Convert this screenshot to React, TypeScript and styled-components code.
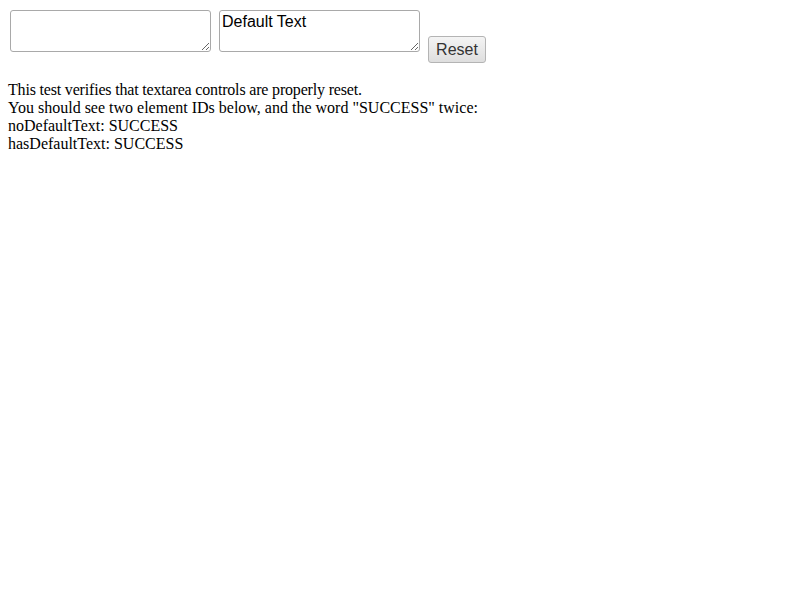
import styled, { createGlobalStyle } from "styled-components";

const GlobalStyle = createGlobalStyle`
  body {
    margin: 8px;
    background: #ffffff;
    color: #000000;
    font-family: "Liberation Serif", "Times New Roman", serif;
    font-size: 16px;
  }
`;

const StyledForm = styled.form`
  display: flex;
  align-items: flex-start;
  gap: 4px;
  margin: 0 0 18px 0;
`;

const StyledTextArea = styled.textarea`
  box-sizing: border-box;
  width: 201px;
  height: 42px;
  margin: 2px;
  padding: 2px;
  border: 1px solid #a9a9a9;
  border-radius: 3px;
  font-family: "Liberation Sans", Arial, sans-serif;
  font-size: 16px;
  line-height: 1.15;
  color: #000;
  resize: both;
`;

const StyledButton = styled.button`
  box-sizing: border-box;
  width: 58px;
  height: 27px;
  margin: 28px 2px 0 2px;
  padding: 1px 6px;
  border: 1px solid #b4b4b4;
  border-radius: 3px;
  background: linear-gradient(#f4f4f4, #dedede);
  font-family: "Liberation Sans", Arial, sans-serif;
  font-size: 16px;
  color: #333;
`;

const StyledLine = styled.div<{ $tight?: boolean }>`
  line-height: 18px;
  letter-spacing: ${(props) => (props.$tight ? "-0.18px" : "normal")};
`;

export default function App() {
  return (
    <>
      <GlobalStyle />
      <StyledForm onSubmit={(e) => e.preventDefault()}>
        <StyledTextArea id="noDefaultText" />
        <StyledTextArea id="hasDefaultText" defaultValue="Default Text" />
        <StyledButton type="reset">Reset</StyledButton>
      </StyledForm>
      <StyledLine $tight>
        This test verifies that textarea controls are properly reset.
      </StyledLine>
      <StyledLine>
        You should see two element IDs below, and the word "SUCCESS" twice:
      </StyledLine>
      <StyledLine>noDefaultText: SUCCESS</StyledLine>
      <StyledLine>hasDefaultText: SUCCESS</StyledLine>
    </>
  );
}
